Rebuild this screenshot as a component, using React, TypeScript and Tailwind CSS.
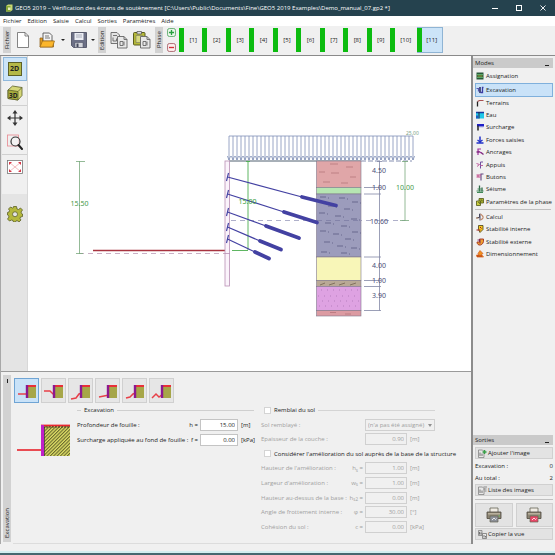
import { ReactNode } from 'react'

interface IconProps {
  children: ReactNode
  className?: string
  box?: string
}

function Icon({ children, className = 'size-2', box = '0 0 16 16' }: IconProps) {
  return (
    <svg viewBox={box} className={`shrink-0 ${className}`} fill="none" aria-hidden="true">
      {children}
    </svg>
  )
}

const menus = ['Fichier', 'Edition', 'Saisie', 'Calcul', 'Sorties', 'Paramètres', 'Aide']

const modes: { label: string; icon: ReactNode }[] = [
  {
    label: 'Excavation',
    icon: (
      <>
        <path d="M1 5h4v6" stroke="#5858b0" strokeWidth="2.4" />
        <path d="M8 14V2" stroke="#20205c" strokeWidth="3" />
        <path d="M9 13h4V3h2" stroke="#3c3ca4" strokeWidth="2.6" />
      </>
    ),
  },
  {
    label: 'Terrains',
    icon: (
      <>
        <path d="M3 15V5" stroke="#222" strokeWidth="2.6" />
        <path d="M3 5l4-2h8" stroke="#a85050" strokeWidth="2.4" />
      </>
    ),
  },
  {
    label: 'Eau',
    icon: (
      <>
        <rect x="0" y="2" width="16" height="13" fill="#20c8e8" />
        <path d="M0 3h16" stroke="#1838a0" strokeWidth="3" />
        <path d="M6 2v13" stroke="#223" strokeWidth="2" />
        <path d="M0 9h5v6H0z" fill="#2060c0" />
      </>
    ),
  },
  {
    label: 'Surcharge',
    icon: (
      <>
        <path d="M2 2h14v5H2z" fill="#2020c8" />
        <path d="M4 5v10" stroke="#222" strokeWidth="3" />
        <path d="M5 8h10" stroke="#8080d8" strokeWidth="1" />
      </>
    ),
  },
  {
    label: 'Forces saisies',
    icon: (
      <>
        <path d="M8 1v11" stroke="#2030c8" strokeWidth="3" />
        <path d="M3 8l5 4 5-4M1 14h14" stroke="#2030c8" strokeWidth="2.6" />
      </>
    ),
  },
  {
    label: 'Ancrages',
    icon: (
      <>
        <path d="M4 14V2h6M4 6l7 4" stroke="#a030a0" strokeWidth="2.4" />
        <path d="M10 9l5 4M1 8h6" stroke="#803080" strokeWidth="3" />
      </>
    ),
  },
  {
    label: 'Appuis',
    icon: (
      <>
        <path d="M9 15V2h5" stroke="#7050a0" strokeWidth="2" />
        <path d="M1 5l6 2-5 4M9 9h5" stroke="#c060a0" strokeWidth="2" />
      </>
    ),
  },
  {
    label: 'Butons',
    icon: (
      <>
        <path d="M10 15V2h5" stroke="#604880" strokeWidth="2.2" />
        <path d="M1 4h9M1 8h8M4 4v4" stroke="#c04888" strokeWidth="2" />
      </>
    ),
  },
  {
    label: 'Séisme',
    icon: (
      <>
        <path d="M7 1v12M12 5v8" stroke="#306848" strokeWidth="2.6" />
        <path d="M1 12h14M3 8h8M2 15h12" stroke="#408858" strokeWidth="2.2" />
      </>
    ),
  },
  {
    label: 'Paramètres de la phase',
    icon: (
      <>
        <path d="M6 1h9v9H6z" fill="#b0b830" stroke="#505818" strokeWidth="1.6" />
        <path d="M1 6h8v9H1z" fill="#c8cc40" stroke="#505818" strokeWidth="1.6" />
        <path d="M9 4h3v3M4 9h3v3" stroke="#404818" strokeWidth="1.2" />
      </>
    ),
  },
]

const results: { label: string; icon: ReactNode }[] = [
  {
    label: 'Calcul',
    icon: (
      <>
        <path d="M3 9h4V2M8 1v14" stroke="#484860" strokeWidth="2" />
        <path d="M9 2c4 3 6 5 5 8-1 2-3 3-5 4" stroke="#c08868" strokeWidth="2.4" />
        <path d="M0 10h5" stroke="#885838" strokeWidth="2" />
      </>
    ),
  },
  {
    label: 'Stabilité interne',
    icon: (
      <>
        <path d="M5 1h9v8l-6 6-3-6z" fill="#f4c820" stroke="#484018" strokeWidth="1.6" />
        <path d="M1 10h8M8 4l3 3" stroke="#a02020" strokeWidth="2" />
      </>
    ),
  },
  {
    label: 'Stabilité externe',
    icon: (
      <>
        <path d="M7 2h8v5c-1 5-5 8-9 7-3-1-4-4-4-6h5z" fill="#f0a030" stroke="#a03020" strokeWidth="1.8" />
        <path d="M3 4h5M8 3v8" stroke="#702060" strokeWidth="1.8" />
      </>
    ),
  },
  {
    label: 'Dimensionnement',
    icon: (
      <>
        <path d="M8 1l6 6-3 2 4 5H2l-1-4h5L4 7z" fill="#f09020" stroke="#d05818" strokeWidth="1.4" />
        <path d="M2 12h10" stroke="#b03010" strokeWidth="2" />
      </>
    ),
  },
]

// ground line in front of the wall, one per excavation shape
const shapes = ['M3 15h9', 'M2 12h6l3 3 2 1', 'M2 20l5-1 3-4 3-1', 'M3 18l5-1 5-1', 'M3 19l4-1 3-3 3-1', 'M2 19l4-4 3 3 4-3']

const anchors = [
  { y: 177, x1: 302, y1: 197, x2: 336, y2: 205.5 },
  { y: 194, x1: 284, y1: 212, x2: 317, y2: 222.5 },
  { y: 212, x1: 266, y1: 226, x2: 299, y2: 238 },
  { y: 227, x1: 260, y1: 241, x2: 281, y2: 249.5 },
  { y: 239, x1: 255, y1: 252, x2: 269, y2: 258.5 },
]

const layers = [
  { top: 161, bottom: 187.5, fill: '#e0a6a8' },
  { top: 187.5, bottom: 194, fill: '#b6e6b2' },
  { top: 194, bottom: 257, fill: '#9c9cbc' },
  { top: 257, bottom: 280.5, fill: '#f8f6b8' },
  { top: 280.5, bottom: 286.5, fill: '#b9a995' },
  { top: 286.5, bottom: 310.5, fill: '#dea2e2' },
  { top: 310.5, bottom: 316, fill: '#dc9ba2' },
]

const depths = [
  { y: 173, text: '4.50' },
  { y: 190, text: '1.00' },
  { y: 224, text: '10.60' },
  { y: 267.5, text: '4.00' },
  { y: 282.5, text: '1.00' },
  { y: 297.5, text: '3.90' },
]

const clayMarks = [
  [320, 197], [339, 198], [352, 202], [328, 206], [344, 209], [319, 213], [335, 216], [351, 219],
  [325, 223], [341, 226], [320, 231], [333, 234], [352, 232], [345, 239], [324, 242], [337, 246], [351, 248], [321, 252], [341, 253],
]

function Drawing() {
  const arrows = Array.from({ length: 47 }, (_, i) => 229 + i * 4)
  return (
    <svg viewBox="28 56 443 315" className="w-full" fill="none" fontFamily="'Noto Sans', sans-serif" role="img" aria-label="Écran de soutènement">
      <g stroke="#8090b8" strokeWidth="0.8">
        <path d="M229 136h184" />
        {arrows.map((x) => (
          <path key={x} d={`M${x} 136v24m-1.6-4l1.6 4 1.6-4`} />
        ))}
      </g>
      <path d="M229 161h132" stroke="#506070" strokeWidth="1" />
      <path d="M361 161h51" stroke="#506090" strokeWidth="0.7" strokeDasharray="5 2" />
      <text x="406" y="135" fontSize="5" fill="#7ba383">25.00</text>

      <path d="M79 253.5h151" stroke="#bd9cb8" strokeWidth="0.8" strokeDasharray="5 4" />
      <path d="M93 250.5h132" stroke="#a83440" strokeWidth="1.4" />
      <rect x="225" y="161" width="4.5" height="125" fill="#fbf3fb" stroke="#b98fb5" strokeWidth="0.8" />
      <path d="M225 253.5h5" stroke="#b98fb5" strokeWidth="0.8" />
      <path d="M231 220.5h174" stroke="#9a9cbc" strokeWidth="0.8" strokeDasharray="5 4" />

      <g stroke="#78a87c" strokeWidth="0.8">
        <path d="M79.5 161v93M76 161.5h9M76 253.5h7" />
        <path d="M405 161v60M402 161.5h6M400 220.5h9" />
      </g>
      <path d="M248 161v89M232 250.5h16M246 161.5h4" stroke="#4cae50" strokeWidth="0.9" />
      <g fontSize="7" textAnchor="middle">
        <text x="79.5" y="206" fill="#469a4b">15.50</text>
        <text x="405" y="190" fill="#469a4b">10.00</text>
      </g>

      {layers.map((l) => (
        <rect key={l.top} x="316.5" y={l.top} width="44.5" height={l.bottom - l.top} fill={l.fill} stroke="#80788c" strokeWidth="0.6" />
      ))}
      <path d="M330 164h8M346 167h7M319 172h6M331 173h8M350 177h6M323 182h7M341 183h7M330 312.5h6M345 314h6" stroke="#b07075" strokeWidth="0.7" />
      <path d="M320 285l5-2M329 285l6-2M339 285l6-2M350 285l6-2" stroke="#7c6c58" strokeWidth="0.9" />
      <path d="M321 290h40M318 296h40M322 301h38M319 306h40" stroke="#b67fbe" strokeWidth="1" strokeDasharray="1 5" />
      {clayMarks.map(([x, y]) => (
        <path key={`${x}-${y}`} d={`M${x} ${y}h6m2 1h1`} stroke="#55557c" strokeWidth="0.7" />
      ))}
      <path d="M317 220.5h44" stroke="#7c7ca4" strokeWidth="0.8" strokeDasharray="5 4" />

      {anchors.map((a) => (
        <g key={a.y} stroke="#4341a2">
          <path d={`M227.5 ${a.y}L${a.x1} ${a.y1}`} strokeWidth="1.2" />
          <path d={`M228.5 ${a.y - 4}l-2 8`} strokeWidth="1.2" />
          <path d={`M${a.x1} ${a.y1}L${a.x2} ${a.y2}`} strokeWidth="3.8" strokeLinecap="round" />
        </g>
      ))}
      <text x="247.5" y="204" fontSize="7" textAnchor="middle" fill="#38a03c">15.00</text>

      <path
        d="M379.5 161v149.5M377 161.5h5M364 187.5h17M364 194h17M364 257h17M364 280.5h17M364 286.5h17M364 310.5h17"
        stroke="#8286a4"
        strokeWidth="0.8"
      />
      <g fontSize="7" textAnchor="middle" fill="#4a4e78">
        {depths.map((d) => (
          <text key={d.y} x="379" y={d.y}>{d.text}</text>
        ))}
      </g>
    </svg>
  )
}

function SideLabel({ text }: { text: string }) {
  return (
    <span className="flex w-2 shrink-0 rotate-180 items-center justify-center bg-[#d2d2d2] leading-2 [writing-mode:vertical-rl]">
      {text}
    </span>
  )
}

function Caret() {
  return <span className="block h-0 w-0 border-x-2 border-t-2 border-x-transparent border-t-[#222]" />
}

function Phase({ n, active }: { n: number; active?: boolean }) {
  return (
    <button className={`flex items-center border-y ${active ? 'border-r border-[#8fb4d4] bg-[#cce4f8]' : 'border-transparent'}`}>
      <span className="h-full w-[5px] shrink-0 bg-[#0cbc10]" />
      <span className="flex-1 text-center">[{n}]</span>
    </button>
  )
}

function PageStack({ paste }: { paste?: boolean }) {
  return (
    <Icon className="size-[18px]" box="0 0 36 36">
      {paste ? (
        <>
          <rect x="1" y="3" width="23" height="25" rx="2" fill="#b4b838" stroke="#5a5c20" strokeWidth="2" />
          <path d="M8 1h9v5H8z" fill="#ddd" stroke="#555" strokeWidth="1.5" />
          <path d="M6 9h13v14H6z" fill="#d8da80" stroke="#666" />
        </>
      ) : (
        <>
          <path d="M2 3h12l5 5v17H2z" fill="#e4e4e4" stroke="#666" strokeWidth="1.8" />
          <path d="M6 9h8M6 13v7h7v-5" stroke="#666" strokeWidth="1.8" />
        </>
      )}
      <path d="M15 11h13l6 6v17H15z" fill="#e8e8e8" stroke="#666" strokeWidth="1.8" />
      <path d="M28 11v6h6M20 21h6v8h-6zM28 21v8" stroke="#666" strokeWidth="1.8" />
    </Icon>
  )
}

function Toolbar() {
  return (
    <div className="flex h-[30px] items-stretch border-b border-[#8a8a8a] bg-[#f0f0f0] pt-px pb-0.5 pl-[3px]">
      <SideLabel text="Fichier" />
      <div className="flex items-center pl-1">
        <button aria-label="Nouveau" className="w-4">
          <Icon className="mx-auto h-4 w-3" box="0 0 24 32">
            <path d="M1 1h15l7 7v23H1z" fill="#fff" stroke="#666" strokeWidth="1.6" />
            <path d="M16 1v7h7" stroke="#666" strokeWidth="1.6" />
          </Icon>
        </button>
        <button aria-label="Ouvrir" className="ml-2">
          <Icon className="size-4" box="0 0 32 32">
            <path d="M8 2h13l5 5v16H8z" fill="#f4f4f4" stroke="#555" strokeWidth="1.8" />
            <path d="M12 8h8M12 12h10" stroke="#777" strokeWidth="2" />
            <path d="M2 12h5v6h22v12H2z" fill="#e09a20" stroke="#8a5a10" strokeWidth="1.4" />
            <path d="M2 30l5-12h24l-4 12z" fill="#fbb62c" stroke="#9a6818" strokeWidth="1.4" />
          </Icon>
        </button>
        <button aria-label="Documents récents" className="ml-1 p-0.5"><Caret /></button>
        <button aria-label="Enregistrer" className="ml-1">
          <Icon className="size-4" box="0 0 32 32">
            <path d="M1 1h30v30H5l-4-4z" fill="#6c7086" stroke="#44485c" strokeWidth="1.6" />
            <path d="M7 2h18v14H7z" fill="#eceef4" />
            <path d="M10 6h12M10 10h12" stroke="#9498a8" strokeWidth="1.5" />
            <path d="M8 21h16v10H8z" fill="#d4d6dc" stroke="#44485c" />
            <path d="M11 23h4v7h-4z" fill="#44485c" />
          </Icon>
        </button>
        <button aria-label="Enregistrer sous" className="ml-0.5 p-0.5"><Caret /></button>
      </div>
      <div className="w-px" />
      <SideLabel text="Edition" />
      <div className="flex items-center gap-[5px] px-1">
        <button aria-label="Copier"><PageStack /></button>
        <button aria-label="Coller"><PageStack paste /></button>
      </div>
      <SideLabel text="Phase" />
      <div className="flex w-4 flex-col items-center justify-between py-px">
        <button aria-label="Ajouter une phase">
          <Icon className="size-[9px]">
            <rect x="1" y="1" width="14" height="14" rx="3" fill="#eef8ee" stroke="#58a868" strokeWidth="1.6" />
            <path d="M8 3.5v9M3.5 8h9" stroke="#28a040" strokeWidth="2.4" />
          </Icon>
        </button>
        <button aria-label="Supprimer une phase">
          <Icon className="size-[9px]">
            <rect x="1" y="1" width="14" height="14" rx="3" fill="#fcf0f0" stroke="#a86068" strokeWidth="1.6" />
            <path d="M3.5 8h9" stroke="#d03038" strokeWidth="2.4" />
          </Icon>
        </button>
      </div>
      <div className="grid w-[211px] grid-cols-9">
        {[1, 2, 3, 4, 5, 6, 7, 8, 9].map((n) => <Phase key={n} n={n} />)}
      </div>
      <div className="grid w-[53px] grid-cols-2">
        <Phase n={10} />
        <Phase n={11} active />
      </div>
    </div>
  )
}

function ViewTools() {
  return (
    <div className="flex w-[27px] shrink-0 flex-col border-r border-[#d8d8d8] bg-[#e4e4e4] pl-px">
      <div className="flex flex-col items-center bg-[#f0f0f0] pb-[15px]">
        <button aria-label="Vue 2D" className="mt-px flex h-6 w-6 items-center justify-center border border-[#8fb8dc] bg-[#cce4f8]">
          <span className="flex h-[14px] w-[14px] items-center justify-center border border-[#5c6028] bg-[#b4b848] text-[7px] font-bold text-[#222]">2D</span>
        </button>
        <button aria-label="Vue 3D" className="flex h-6 items-center">
          <Icon className="size-4" box="0 0 32 32">
            <path d="M2 10l9-8 19 3v16l-8 9-20-3z" fill="#d4d678" stroke="#5c6028" strokeWidth="1.6" />
            <path d="M2 10l20 3v17l-20-3z" fill="#a8ac3c" stroke="#5c6028" strokeWidth="1.6" />
            <path d="M22 13l8-8" stroke="#5c6028" strokeWidth="1.6" />
            <text x="4" y="25" fontSize="13" fontWeight="700" fill="#222">3D</text>
          </Icon>
        </button>
        <div className="h-px w-full bg-[#d0d0d0]" />
        <button aria-label="Déplacer" className="flex h-6 items-center">
          <Icon className="size-4" box="0 0 32 32">
            <path d="M16 4v24M4 16h24" stroke="#333" strokeWidth="2.4" />
            <path d="M16 0l5 7H11zM16 32l5-7H11zM0 16l7-5v10zM32 16l-7-5v10z" fill="#333" />
          </Icon>
        </button>
        <button aria-label="Zoom fenêtre" className="flex h-6 items-center">
          <Icon className="size-4" box="0 0 32 32">
            <rect x="1" y="2" width="22" height="22" stroke="#e88890" strokeWidth="1.6" />
            <circle cx="17" cy="15" r="9" fill="#f4f4f4" fillOpacity="0.7" stroke="#333" strokeWidth="2.4" />
            <path d="M23 22l7 8" stroke="#222" strokeWidth="4" strokeLinecap="round" />
          </Icon>
        </button>
        <div className="h-px w-full bg-[#d0d0d0]" />
        <button aria-label="Vue totale" className="flex h-6 items-center">
          <Icon className="h-[14px] w-4" box="0 0 32 28">
            <rect x="1" y="1" width="30" height="26" fill="#fff" stroke="#777" strokeWidth="1.6" />
            <path d="M5 5l22 18M27 5L5 23" stroke="#eca0a4" strokeWidth="1.4" />
            <path d="M4 4h6l-6 6zM28 4h-6l6 6zM4 24h6l-6-6zM28 24h-6l6-6z" fill="#d83848" />
          </Icon>
        </button>
      </div>
      <button aria-label="Réglages" className="mx-auto mt-3">
        <Icon className="size-4" box="0 0 32 32">
          <g stroke="#5c6028" strokeWidth="1.6" fill="#b4b83c">
            <path d="M13 1h6l1 5 3 1 4-3 4 4-3 4 1 3 2 1v5l-4 1-1 3 2 3-4 4-4-3-2 1-1 2h-4l-1-3-3-1-4 2-4-4 3-4-1-3-2-1v-5l3-1 1-3-2-3 4-4 4 2 2-1z" />
            <circle cx="16" cy="16.5" r="5" fill="#e4e4e4" />
          </g>
        </Icon>
      </button>
    </div>
  )
}

function PanelTitle({ text }: { text: string }) {
  return (
    <div className="flex h-[10px] items-center justify-between bg-[#cacaca] px-0.5">
      <h2>{text}</h2>
      <button aria-label={`Réduire ${text}`} className="mt-1 mr-0.5 h-px w-1 bg-[#222]" />
    </div>
  )
}

function ModeItem({ label, icon, active }: { label: string; icon: ReactNode; active?: boolean }) {
  return (
    <button
      className={`ml-0.5 flex items-center gap-0.5 border text-left whitespace-nowrap ${active ? '-my-px border-[#7fb0dc] bg-[#c9e2f8]' : 'border-transparent'}`}
    >
      <Icon>{icon}</Icon>
      {label}
    </button>
  )
}

function PageIcon({ green }: { green?: boolean }) {
  return (
    <Icon className="size-[9px]" box="0 0 18 18">
      <path d="M1 2h8l3 3v12H1z" fill="#e8e8e8" stroke="#777" strokeWidth="1.4" />
      <path d="M4 7v7M8 9v5" stroke="#666" strokeWidth="1.8" />
      {green ? <path d="M13 2v8M9 6h8" stroke="#38a048" strokeWidth="3" /> : <path d="M11 2h7M11 6h6M13 10h4" stroke="#666" strokeWidth="1.4" />}
    </Icon>
  )
}

function CopyIcon() {
  return (
    <Icon className="size-[9px]" box="0 0 18 18">
      <path d="M1 1h7v10H1z" fill="#d8d8d8" stroke="#777" strokeWidth="1.4" />
      <path d="M3 4v5M6 5v4" stroke="#555" strokeWidth="1.6" />
      <path d="M9 7h8v10H9z" fill="#e8e8e8" stroke="#666" strokeWidth="1.4" />
      <path d="M12 10v5M15 12v3" stroke="#555" strokeWidth="1.6" />
    </Icon>
  )
}

function Printer({ tone }: { tone: string }) {
  return (
    <Icon className="size-4" box="0 0 32 32">
      <path d="M8 2h16v9H8z" fill="#f0ece4" stroke="#665" strokeWidth="1.6" />
      <path d="M2 10h28v13H2z" fill="#8c8474" stroke="#4c483c" strokeWidth="1.6" />
      <path d="M4 12h24v3H4z" fill="#b8b09c" />
      <path d="M25 18h3" stroke="#60c060" strokeWidth="2" />
      <path d="M8 18h16v12H8z" fill={tone} stroke="#665" strokeWidth="1.4" />
      <path d="M12 26l4-4 3 3 2-2" stroke="#fff" strokeWidth="1.6" />
    </Icon>
  )
}

const sideButton = 'flex items-center border border-[#d0d0d0] bg-[#e3e3e3]'

function RightPanel() {
  return (
    <aside className="flex w-[84px] shrink-0 flex-col border-l-2 border-[#8c8c8c] bg-[#f0f0f0] pt-0.5 pr-0.5">
      <PanelTitle text="Modes" />
      <nav className="flex flex-col">
        <div className="flex h-4 flex-col justify-center">
          <ModeItem
            label="Assignation"
            icon={
              <>
                <rect x="1" y="1" width="14" height="14" fill="#285838" />
                <path d="M2 5h12M2 11h12" stroke="#58a868" strokeWidth="2" />
                <path d="M3 8h10" stroke="#d8c840" strokeWidth="1.4" />
              </>
            }
          />
        </div>
        <div className="grid h-[124px] auto-rows-fr grid-cols-1">
          {modes.map((m) => <ModeItem key={m.label} {...m} active={m.label === 'Excavation'} />)}
        </div>
        <div className="mx-0.5 mt-px h-px bg-[#c0c0c0]" />
        <div className="mt-px grid h-[49px] auto-rows-fr grid-cols-1">
          {results.map((m) => <ModeItem key={m.label} {...m} />)}
        </div>
      </nav>
      <div className="mt-auto mb-1 flex flex-col">
        <PanelTitle text="Sorties" />
        <div className="flex flex-col pt-0.5 pl-0.5">
          <button className={`${sideButton} h-3 gap-px pl-0.5`}><PageIcon green />Ajouter l&apos;image</button>
          <dl className="grid grid-cols-[1fr_auto] pt-px leading-3">
            <dt>Excavation :</dt><dd>0</dd>
            <dt>Au total :</dt><dd>2</dd>
          </dl>
          <button className={`${sideButton} h-3 gap-px pl-0.5`}><PageIcon />Liste des images</button>
          <div className="my-[3px] h-px bg-[#c0c0c0]" />
          <div className="grid h-6 grid-cols-2 gap-[3px]">
            <button aria-label="Imprimer la vue" className={`${sideButton} justify-center`}><Printer tone="#8c9098" /></button>
            <button aria-label="Imprimer le rapport" className={`${sideButton} justify-center`}><Printer tone="#e84868" /></button>
          </div>
          <button className={`${sideButton} mt-px h-3 gap-px pl-0.5`}><CopyIcon />Copier la vue</button>
        </div>
      </div>
    </aside>
  )
}

interface FieldProps {
  id: string
  label: string
  symbol: ReactNode
  value: string
  unit: string
  disabled?: boolean
}

function Field({ id, label, symbol, value, unit, disabled }: FieldProps) {
  return (
    <div className={`flex items-center ${disabled ? 'text-[#a0a0a0]' : ''}`}>
      <label htmlFor={id} className="flex flex-1 justify-between pr-0.5 whitespace-nowrap">
        <span>{label}</span>
        <span>{symbol}</span>
      </label>
      <input
        id={id}
        defaultValue={value}
        disabled={disabled}
        className={`h-3 border px-0.5 text-right ${disabled ? 'w-[42px] border-[#d0d0d0] bg-[#f0f0f0]' : 'w-[38px] border-[#c4c4c4] bg-white'}`}
      />
      <span className={`pl-[3px] ${disabled ? 'w-7' : 'w-[19px]'}`}>{unit}</span>
    </div>
  )
}

function CheckTitle({ id, label, line }: { id: string; label: string; line?: boolean }) {
  return (
    <div className="flex items-center gap-[3px]">
      <input id={id} type="checkbox" className="ml-[3px] size-[7px] shrink-0 appearance-none border border-[#d4d4d4] bg-white" />
      <label htmlFor={id} className="whitespace-nowrap">{label}</label>
      {line && <span className="h-px flex-1 bg-[#d4d4d4]" />}
    </div>
  )
}

function ExcavationPanel() {
  return (
    <section className="flex border-t border-[#9a9a9a] bg-[#f0f0f0] pt-[3px] pl-[2px]">
      <div className="mb-0.5 flex w-2 flex-col items-center justify-between bg-[#d2d2d2] py-1">
        <span className="h-1 w-px bg-[#222]" />
        <h2 className="rotate-180 leading-2 [writing-mode:vertical-rl]">Excavation</h2>
      </div>
      <div className="ml-0.5 min-w-0 flex-1 border-b border-[#dcdcdc] pt-[3px] pb-[9px]">
        <div className="flex gap-0.5 pl-px">
          {shapes.map((d, i) => (
            <button
              key={d}
              aria-label={`Forme ${i + 1}`}
              className={`flex size-[25px] items-center justify-center border ${i === 0 ? 'border-[#6fa4d4] bg-[#c9e2f8]' : 'border-[#d0d0d0] bg-[#e6e6e6]'}`}
            >
              <Icon className="size-[23px]" box="0 0 23 23">
                <rect x="12" y="7" width="9" height="12" fill="#a6a648" />
                <path d={d} stroke="#e84048" strokeWidth="1.5" />
                <path d="M11 7h10" stroke="#e83038" strokeWidth="2" />
                <path d="M12 6v13" stroke="#8c1890" strokeWidth="2.4" />
              </Icon>
            </button>
          ))}
        </div>
        <div className="flex">
          <Icon className="mt-[21px] ml-1 h-[33px] w-[53px]" box="0 0 53 33">
            <defs>
              <pattern id="hatch" width="2.4" height="2.4" patternUnits="userSpaceOnUse" patternTransform="rotate(45)">
                <rect width="2.4" height="2.4" fill="#e2e268" />
                <rect width="1.1" height="2.4" fill="#66662c" />
              </pattern>
            </defs>
            <rect x="26" y="1" width="27" height="31" fill="url(#hatch)" />
            <path d="M24 1.5h29" stroke="#e82830" strokeWidth="1.8" />
            <path d="M26 3h27" stroke="#222" strokeWidth="0.8" strokeDasharray="2 1" />
            <path d="M25.5 1v31" stroke="#c020c8" strokeWidth="3" />
            <path d="M27.5 3v29" stroke="#333" strokeWidth="0.7" />
            <path d="M0 26h24" stroke="#e83840" strokeWidth="1.8" />
          </Icon>
          <div className="ml-[7px] grid h-[44px] w-[180px] shrink-0 auto-rows-fr grid-cols-1">
            <div className="flex items-center gap-[3px] pr-[3px]">
              <span className="h-px w-1 bg-[#cfcfcf]" />
              <h3>Excavation</h3>
              <span className="h-px flex-1 bg-[#cfcfcf]" />
            </div>
            <Field id="depth" label="Profondeur de fouille :" symbol="h =" value="15.00" unit="[m]" />
            <Field id="load" label="Surcharge appliquée au fond de fouille :" symbol="f =" value="0.00" unit="[kPa]" />
          </div>
          <div className="ml-1 grid h-[131px] w-[174px] shrink-0 auto-rows-fr grid-cols-1">
            <CheckTitle id="backfill" label="Remblai du sol" line />
            <div className="flex items-center text-[#a0a0a0]">
              <label htmlFor="soil" className="flex-1">Sol remblayé :</label>
              <div className="relative flex">
                <select id="soil" disabled className="h-3 w-[70px] appearance-none border border-[#d0d0d0] px-0.5 opacity-100">
                  <option>(n&apos;a pas été assigné)</option>
                </select>
                <span className="absolute top-[5px] right-[3px] h-0 w-0 border-x-2 border-t-[3px] border-x-transparent border-t-[#909090]" />
              </div>
            </div>
            <Field id="thickness" label="Epaisseur de la couche :" symbol="" value="0.90" unit="[m]" disabled />
            <CheckTitle id="improve" label="Considérer l'amélioration du sol auprès de la base de la structure" />
            <Field id="hs" label="Hauteur de l'amélioration :" symbol={<>h<sub>s</sub> =</>} value="1.00" unit="[m]" disabled />
            <Field id="ws" label="Largeur d'amélioration :" symbol={<>w<sub>s</sub> =</>} value="1.00" unit="[m]" disabled />
            <Field id="hs2" label="Hauteur au-dessus de la base :" symbol={<>h<sub>s2</sub> =</>} value="0.00" unit="[m]" disabled />
            <Field id="phi" label="Angle de frottement interne :" symbol="φ =" value="30.00" unit="[°]" disabled />
            <Field id="coh" label="Cohésion du sol :" symbol="c =" value="0.00" unit="[kPa]" disabled />
          </div>
        </div>
      </div>
    </section>
  )
}

export default function App() {
  return (
    <div className="flex min-h-screen flex-col border-b-2 border-[#47686f] bg-[#f0f0f0] font-['Open_Sans','Noto_Sans',sans-serif] text-[6px] leading-[10px] text-[#222]">
      <header className="flex h-4 items-center bg-[#25424e] px-[5px] text-white">
        <Icon className="size-2">
          <path d="M2 4l4-3h9v11l-4 3H2z" fill="#c8d870" />
          <path d="M2 4h9v11H2z" fill="#86a838" />
          <path d="M6 7h5v5H6z" fill="#e8f0c0" />
        </Icon>
        <h1 className="ml-0.5 flex-1 whitespace-nowrap">
          GEO5 2019 – Vérification des écrans de soutènement [C:\Users\Public\Documents\Fine\GEO5 2019 Examples\Demo_manual_07.gp2 *]
        </h1>
        <div className="flex items-center gap-[18px] pr-1">
          <button aria-label="Réduire" className="h-px w-[6px] bg-white" />
          <button aria-label="Agrandir" className="size-[6px] border border-white" />
          <button aria-label="Fermer">
            <Icon className="size-[6px]" box="0 0 6 6">
              <path d="M0.5 0.5l5 5M5.5 0.5l-5 5" stroke="#fff" strokeWidth="0.9" />
            </Icon>
          </button>
        </div>
      </header>
      <nav className="flex gap-[6px] bg-white pl-[3px]">
        {menus.map((m) => <button key={m}>{m}</button>)}
      </nav>
      <Toolbar />
      <div className="flex flex-1">
        <main className="flex min-w-0 flex-1 flex-col border-l border-[#a8a8a8]">
          <div className="flex flex-1 bg-white">
            <ViewTools />
            <div className="min-w-0 flex-1">
              <Drawing />
            </div>
          </div>
          <ExcavationPanel />
        </main>
        <RightPanel />
      </div>
      <footer className="h-[9px] border-b-2 border-[#d4eef0]" />
    </div>
  )
}
